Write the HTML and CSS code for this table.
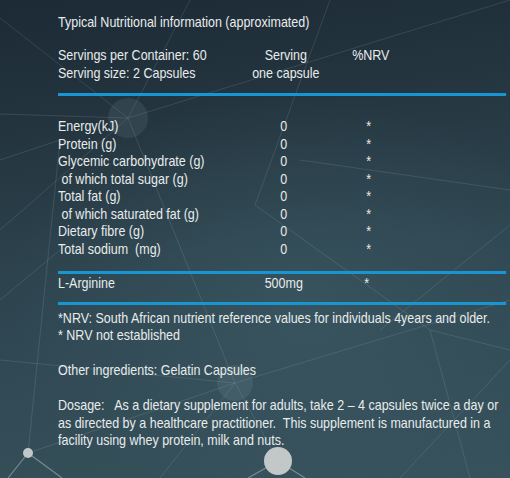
FILE: index.html
```html
<!DOCTYPE html>
<html>
<head>
<meta charset="utf-8">
<link rel="stylesheet" href="styles.css">
</head>
<body>
<div class="panel">
  <svg class="bg" viewBox="0 0 510 478" width="510" height="478">
    <g class="net">
      <line x1="0" y1="18" x2="128" y2="118"/>
      <line x1="190" y1="0" x2="128" y2="118"/>
      <line x1="0" y1="114" x2="128" y2="118"/>
      <line x1="128" y1="118" x2="510" y2="0"/>
      <line x1="128" y1="118" x2="235" y2="383"/>
      <line x1="128" y1="118" x2="0" y2="230"/>
      <line x1="0" y1="160" x2="60" y2="140"/>
      <line x1="60" y1="140" x2="28" y2="453"/>
      <line x1="235" y1="383" x2="28" y2="453"/>
      <line x1="235" y1="383" x2="278" y2="461"/>
      <line x1="235" y1="383" x2="510" y2="300"/>
      <line x1="235" y1="383" x2="0" y2="360"/>
      <line x1="235" y1="383" x2="160" y2="478"/>
      <line x1="255" y1="205" x2="430" y2="330"/>
      <line x1="430" y1="330" x2="510" y2="350"/>
      <line x1="380" y1="330" x2="510" y2="225"/>
      <line x1="300" y1="160" x2="510" y2="190"/>
      <line x1="430" y1="330" x2="470" y2="478"/>
      <line x1="510" y1="360" x2="400" y2="478"/>
      <line x1="330" y1="0" x2="255" y2="205"/>
      <line x1="0" y1="300" x2="60" y2="250"/>
    </g>
    <circle class="halo" cx="128" cy="118" r="20"/>
    <circle class="halo" cx="235" cy="383" r="18"/>
    <g class="bright">
      <line x1="28" y1="453" x2="8" y2="478"/>
      <line x1="28" y1="453" x2="62" y2="478"/>
      <line x1="278" y1="461" x2="248" y2="478"/>
      <line x1="278" y1="461" x2="305" y2="478"/>
    </g>
    <circle class="dot" cx="28" cy="453" r="5"/>
    <circle class="dot" cx="278" cy="461" r="14"/>
  </svg>

  <div class="content">
    <p class="title">Typical Nutritional information (approximated)</p>

    <div class="grid head">
      <span>Servings per Container: 60</span><span class="val">Serving</span><span class="nrv">%NRV</span>
      <span>Serving size: 2 Capsules</span><span class="val">one capsule</span><span></span>
    </div>

    <div class="rule rule-top"></div>

    <div class="grid rows">
      <span>Energy(kJ)</span><span class="val">0</span><span class="star">*</span>
      <span>Protein (g)</span><span class="val">0</span><span class="star">*</span>
      <span>Glycemic carbohydrate (g)</span><span class="val">0</span><span class="star">*</span>
      <span> of which total sugar (g)</span><span class="val">0</span><span class="star">*</span>
      <span>Total fat (g)</span><span class="val">0</span><span class="star">*</span>
      <span> of which saturated fat (g)</span><span class="val">0</span><span class="star">*</span>
      <span>Dietary fibre (g)</span><span class="val">0</span><span class="star">*</span>
      <span>Total sodium  (mg)</span><span class="val">0</span><span class="star">*</span>
    </div>

    <div class="rule rule-mid"></div>

    <div class="grid arg">
      <span>L-Arginine</span><span class="val">500mg</span><span class="star">*</span>
    </div>

    <div class="rule rule-low"></div>

    <p class="note">*NRV: South African nutrient reference values for individuals 4years and older.<br>* NRV not established</p>

    <p class="para">Other ingredients: Gelatin Capsules</p>

    <p class="para">Dosage:   As a dietary supplement for adults, take 2 – 4 capsules twice a day or<br>as directed by a healthcare practitioner.  This supplement is manufactured in a<br>facility using whey protein, milk and nuts.</p>
  </div>
</div>
</body>
</html>
```

FILE: styles.css
```css
html, body {
  margin: 0;
  padding: 0;
}

body {
  width: 510px;
  height: 478px;
  overflow: hidden;
  background: #2a3e48;
}

.panel {
  position: relative;
  width: 510px;
  height: 478px;
  overflow: hidden;
  background:
    radial-gradient(ellipse 420px 300px at 300px 300px, rgba(70, 105, 115, 0.35), rgba(70, 105, 115, 0) 70%),
    linear-gradient(172deg, #1c2a35 0%, #24353f 25%, #2e4550 55%, #37525c 100%);
  font-family: "Liberation Sans", Arial, sans-serif;
  font-size: 15px;
  line-height: 17.5px;
  color: #e8ecec;
}

.bg {
  position: absolute;
  left: 0;
  top: 0;
}

.net line {
  stroke: rgba(190, 215, 222, 0.14);
  stroke-width: 1;
}

.halo {
  fill: rgba(160, 190, 198, 0.11);
}

.bright line {
  stroke: rgba(200, 210, 212, 0.45);
  stroke-width: 1.2;
}

.dot {
  fill: #c2c7c8;
}

/* the source typography is a condensed Arial; emulate with a horizontal scale */
.content {
  position: relative;
  margin-left: 58px;
  padding-top: 13px;
  width: 538px;
  transform: scaleX(0.833);
  transform-origin: 0 0;
}

p {
  margin: 0;
}

.grid {
  display: grid;
  grid-template-columns: 211px 120px 84px;
  white-space: pre;
}

.val,
.nrv,
.star {
  text-align: center;
}

.head {
  margin-top: 15.5px;
}

.head .val,
.head .nrv {
  padding-left: 5px;
}

.rule {
  height: 3px;
  background: #1896d3;
}

.rule-top {
  margin-top: 12px;
}

.rows {
  margin-top: 21px;
}

.rule-mid {
  margin-top: 13.5px;
}

.rule-low {
  margin-top: 10.5px;
}

.arg .star {
  padding-right: 5px;
}

.note {
  margin-top: 4px;
  white-space: pre;
}

.para {
  margin-top: 17.5px;
  white-space: pre;
}
```
